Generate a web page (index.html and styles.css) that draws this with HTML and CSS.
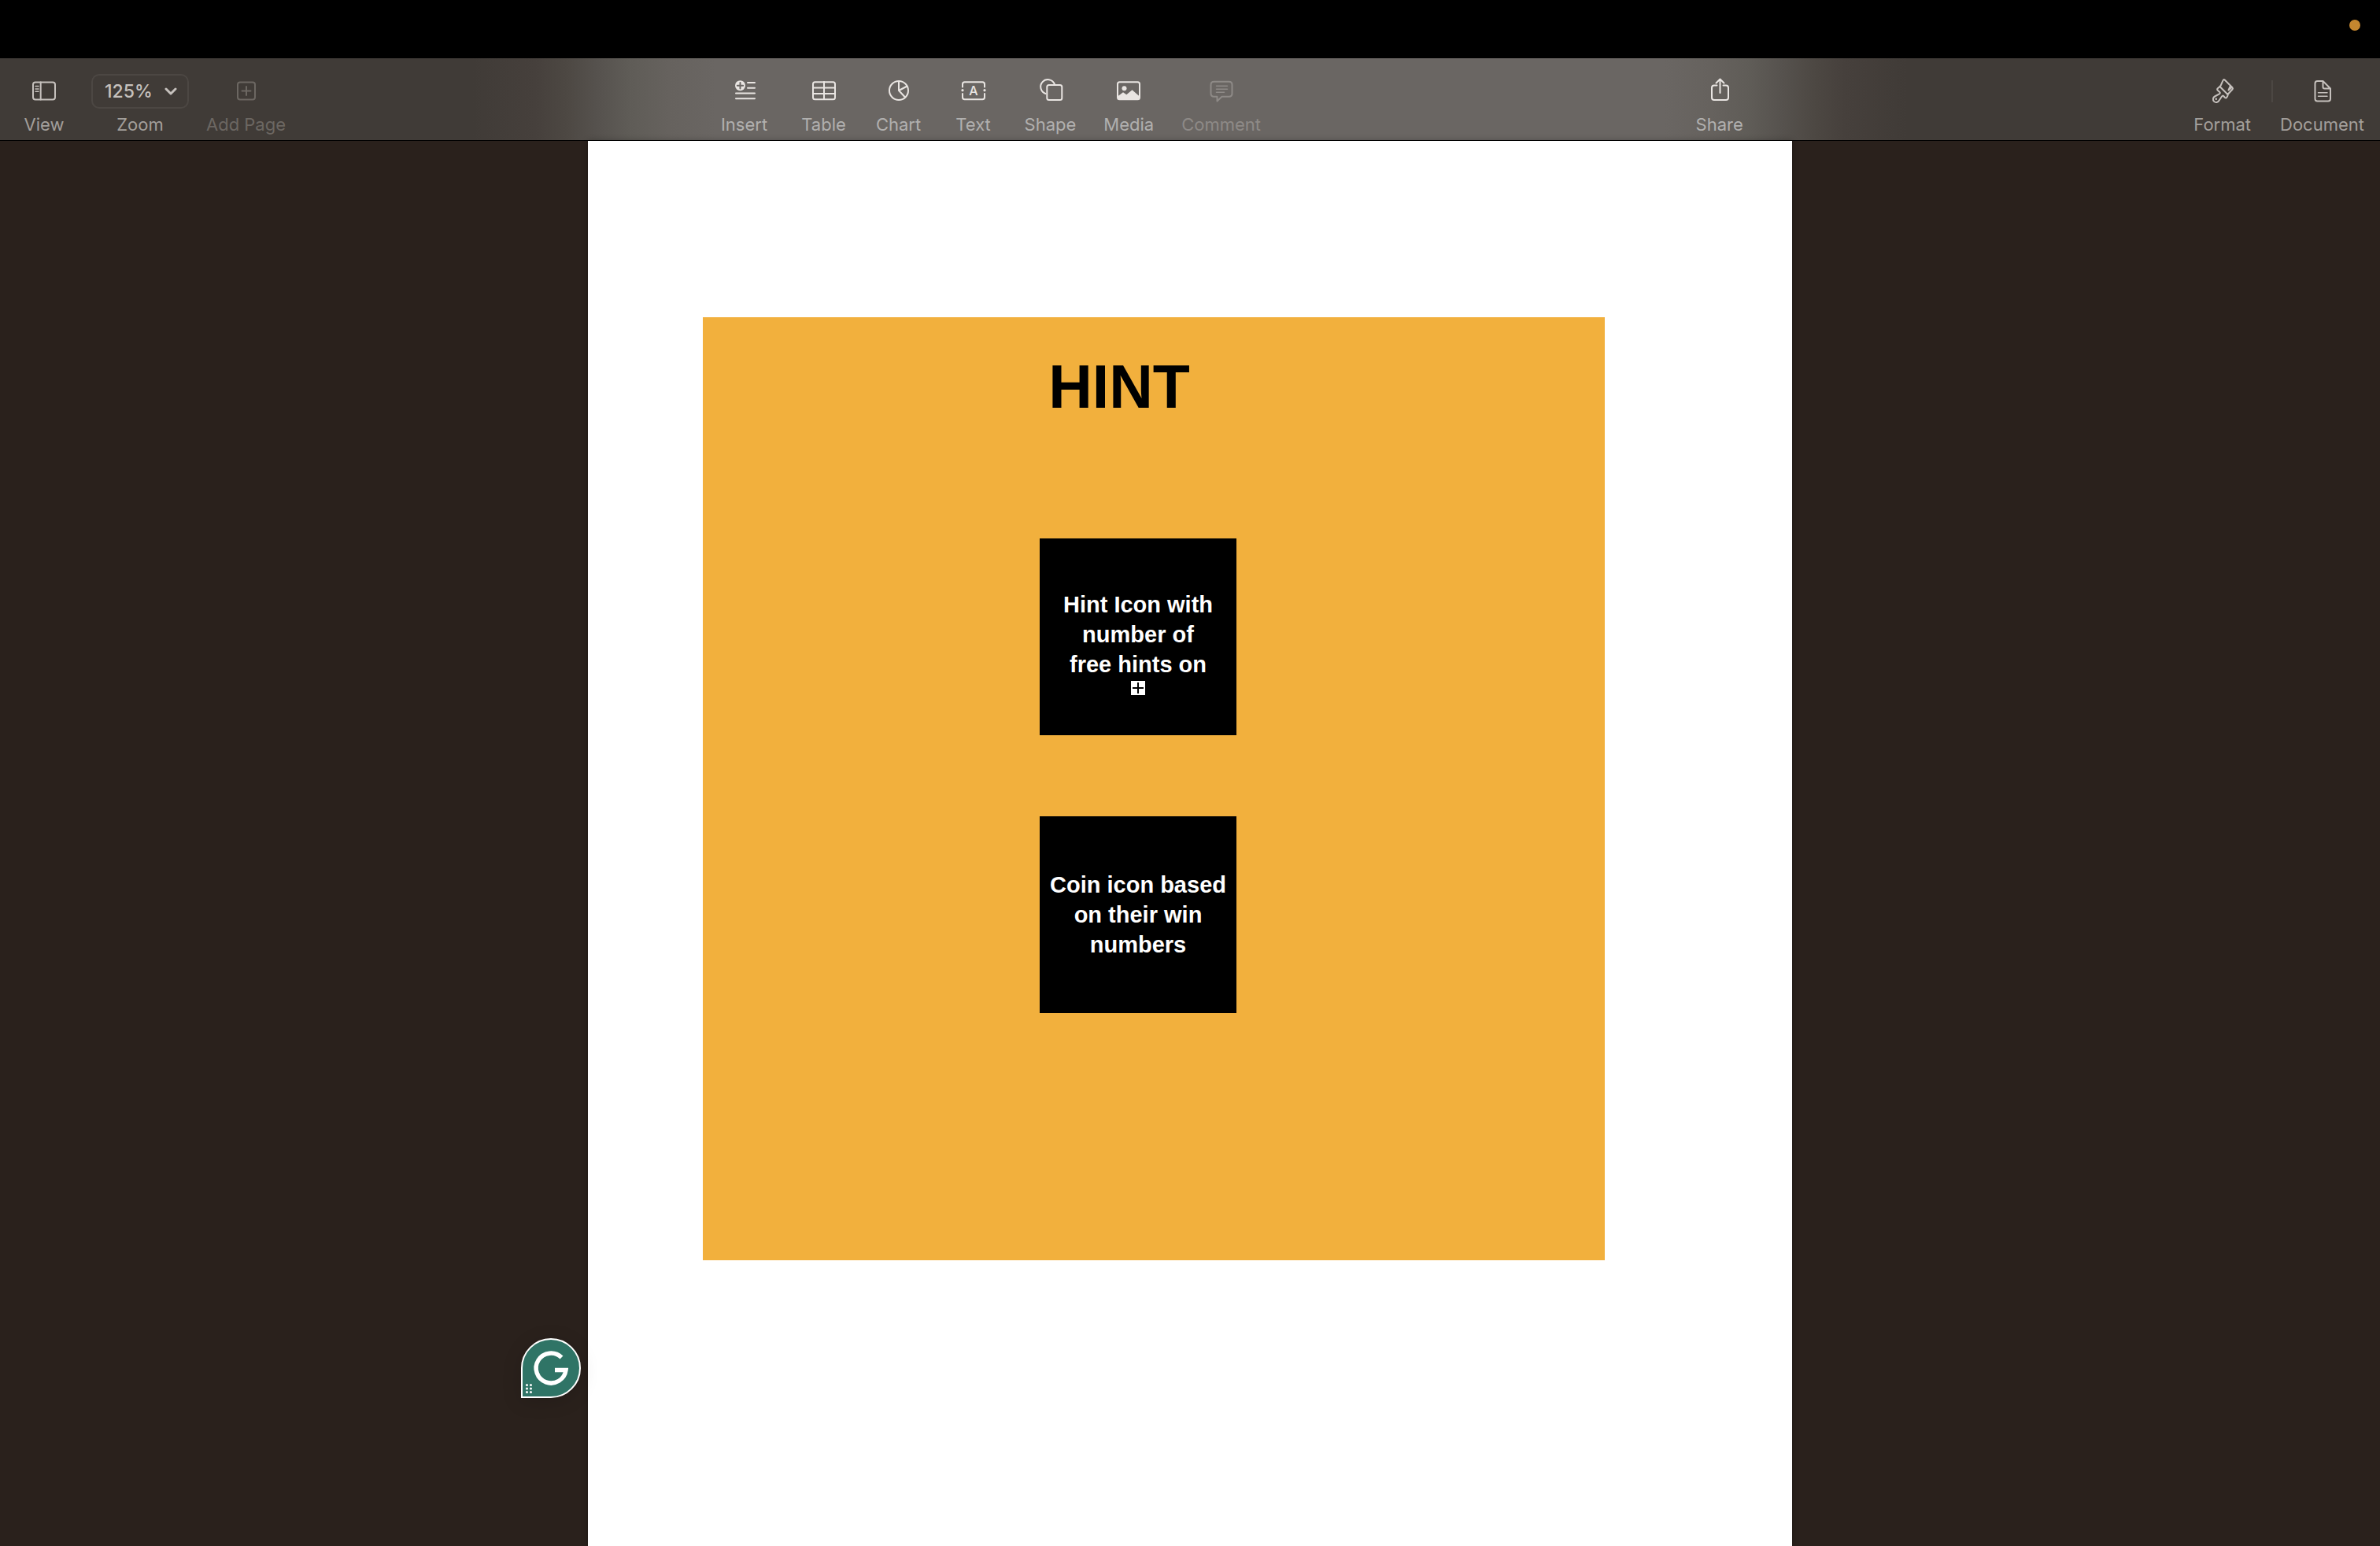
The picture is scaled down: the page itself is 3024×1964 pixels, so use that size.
FILE: index.html
```html
<!DOCTYPE html>
<html lang="en">
<head>
<meta charset="utf-8">
<title>Hint</title>
<link rel="stylesheet" href="styles.css">
</head>
<body>
<div class="menubar"><span class="recording-dot"></span></div>

<header class="toolbar">
  <div class="group group-view">
    <button class="tool" type="button">
      <svg class="icon" viewBox="0 0 44 44"><rect x="8" y="10.5" width="28" height="22" rx="3"/><path d="M17.7 10.5v22"/><path class="thin" d="M11 15.5h4M11 18.9h4M11 22.3h4"/></svg>
      <span class="label">View</span>
    </button>
    <div class="zoom">
      <div class="zoom-box">
        <select class="zoom-select" id="zoom"><option>125%</option></select>
        <svg class="chevron" viewBox="0 0 16 12"><path d="M2 3l6 6 6-6"/></svg>
      </div>
      <label class="label" for="zoom">Zoom</label>
    </div>
    <button class="tool tool-page" type="button" disabled>
      <svg class="icon" viewBox="0 0 44 44"><rect x="11" y="10.500" width="22" height="22" rx="3"/><path d="M22 16v11M16.500 21.500h11"/></svg>
      <span class="label">Add Page</span>
    </button>
  </div>

  <div class="group group-insert">
    <button class="tool tool-insert" type="button">
      <svg class="icon" viewBox="0 0 44 44"><circle class="solid" cx="16.500" cy="14.700" r="6.500"/><path class="cut" d="M16.500 11v7.400M12.800 14.700h7.400"/><path d="M26 11h9M26 17.800h9M11 24.500h24M11 31.200h24"/></svg>
      <span class="label">Insert</span>
    </button>
    <button class="tool" type="button">
      <svg class="icon" viewBox="0 0 44 44"><rect x="8" y="10.300" width="28" height="22" rx="2.500"/><path d="M22 10v22M8 17.600h28M8 25h28"/></svg>
      <span class="label">Table</span>
    </button>
    <button class="tool" type="button">
      <svg class="icon" viewBox="0 0 44 44"><circle cx="22" cy="21" r="12"/><path d="M22 9v12l10.500-5.500M22 21l8 8.500"/></svg>
      <span class="label">Chart</span>
    </button>
    <button class="tool" type="button">
      <svg class="icon" viewBox="0 0 44 44"><path d="M8 16.500V13q0-2.700 2.700-2.700h22.600Q36 10.300 36 13v3.500M8 25v4.500q0 2.800 2.700 2.800h22.600q2.700 0 2.700-2.800V25"/><circle class="solid" cx="8" cy="20.700" r="1.600"/><circle class="solid" cx="36" cy="20.700" r="1.600"/><text class="glyph" x="22" y="27">A</text></svg>
      <span class="label">Text</span>
    </button>
    <button class="tool" type="button">
      <svg class="icon" viewBox="0 0 44 44"><path d="M27.800 12.500A9.200 9.200 0 1 0 16.500 25"/><rect x="18.300" y="14" width="19" height="19" rx="2.500"/></svg>
      <span class="label">Shape</span>
    </button>
    <button class="tool" type="button">
      <svg class="icon" viewBox="0 0 44 44"><rect x="8" y="10.300" width="28" height="22" rx="2.500"/><circle class="solid" cx="16.500" cy="18.300" r="3"/><path class="solid" d="M8 28.500l7-5.200 4.300 3 7.200-6 9.500 8.200V32H8z"/></svg>
      <span class="label">Media</span>
    </button>
    <button class="tool" type="button" disabled>
      <svg class="icon" viewBox="0 0 44 44"><path d="M12.500 9.700h19q4 0 4 4v11q0 4-4 4h-9l-6 5.800v-5.800h-4q-4 0-4-4v-11q0-4 4-4z"/><path class="thin" d="M15.500 15.300h14M15.500 19.300h14M15.500 23.300h10"/></svg>
      <span class="label">Comment</span>
    </button>
  </div>

  <div class="group group-insert">
    <button class="tool" type="button">
      <svg class="icon" viewBox="0 0 44 44"><path d="M18.500 14.500H15q-3 0-3 3V30q0 3 3 3h15q3 0 3-3V17.500q0-3-3-3h-3.500M22.500 6.500V24M17.500 11.500l5-5 5 5"/></svg>
      <span class="label">Share</span>
    </button>
  </div>

  <div class="group group-panels">
    <button class="tool" type="button">
      <svg class="icon" viewBox="0 0 44 44"><path d="M18.500 16C21 13.500 21 10 23 7.500q.8-.7 1.700 0L34.500 17.300q1 1.200 0 2.200L28.500 26zM33 17.500l-3.500 3M32 15l-2.500 5.500"/><path d="M18.500 16l-2.700 2.300q-1.200 1.200 0 2.500l2.700 2.500q.8 1.200-.7 2l-5.800 3.200a4 4 0 1 0 5.500 5.300l3.500-5.300q1-1.500 2.200-.5l1.800 2q1.200 1 2.200-.2 1.800-1.800 1.300-3.800"/><circle class="solid" cx="13.800" cy="31.700" r="1.300"/></svg>
      <span class="label">Format</span>
    </button>
    <span class="divider"></span>
    <button class="tool" type="button">
      <svg class="icon" viewBox="0 0 44 44"><path d="M15.500 9h7L32 18.500V31.500q0 3-3 3H15.500q-3 0-3-3V12q0-3 3-3zM22.500 9v7.500q0 2 2 2H32"/><path class="thin" d="M16.500 23.700H28M16.500 28.300H28"/></svg>
      <span class="label">Document</span>
    </button>
  </div>
</header>

<main class="workspace">
  <article class="page">
    <section class="card">
      <h1 class="title">HINT</h1>
      <div class="tile tile-overflowing">
        <p class="tile-text">Hint Icon with<br>number of<br>free hints on</p>
        <svg class="overflow-mark" viewBox="0 0 18 18"><rect width="18" height="18" fill="#fff"/><path d="M9 2v14M2 9h14" stroke="#000" stroke-width="2"/></svg>
      </div>
      <div class="tile">
        <p class="tile-text">Coin icon based<br>on their win<br>numbers</p>
      </div>
    </section>
    <button class="assistant" type="button" aria-label="Writing assistant">
      <svg class="assistant-logo" viewBox="0 0 72 72"><path d="M49.500 22.500A19 19 0 1 0 55 38.500H41" fill="none" stroke="#fff" stroke-width="5.500"/><g fill="#fff"><circle cx="5.500" cy="57.500" r="1.500"/><circle cx="10.500" cy="57.500" r="1.500"/><circle cx="5.500" cy="62" r="1.500"/><circle cx="10.500" cy="62" r="1.500"/><circle cx="5.500" cy="66.500" r="1.500"/><circle cx="10.500" cy="66.500" r="1.500"/></g></svg>
    </button>
  </article>
</main>
</body>
</html>
```
FILE: styles.css
```css
* {
  box-sizing: border-box;
}

body {
  margin: 0;
  min-height: 100vh;
  display: flex;
  flex-direction: column;
  background: #2a211c;
  font-family: Inter, "Liberation Sans", sans-serif;
}

.menubar {
  height: 74px;
  padding: 25px 25px 0;
  display: flex;
  justify-content: flex-end;
  background: #000;
}

.recording-dot {
  width: 14px;
  height: 14px;
  border-radius: 50%;
  background: #c4862f;
}

.toolbar {
  position: relative;
  display: flex;
  justify-content: space-between;
  padding: 20px 20px 7px 26px;
  border-bottom: 1px solid #000;
  background: linear-gradient(90deg,
    #403b37 calc(50% - 912px),
    #46403c calc(50% - 832px),
    #4d4843 calc(50% - 792px),
    #56524e calc(50% - 752px),
    #5f5c57 calc(50% - 712px),
    #66625e calc(50% - 662px),
    #6a6663 calc(50% - 602px),
    #6a6663 calc(50% + 602px),
    #66625e calc(50% + 662px),
    #5f5c57 calc(50% + 712px),
    #56524e calc(50% + 752px),
    #4d4843 calc(50% + 792px),
    #46403c calc(50% + 832px),
    #403b37 calc(50% + 912px));
}

.group {
  display: flex;
  color: #c6c1bd;
}

.group-view {
  --label: #a39f9b;
  --disabled: #6c6762;
  gap: 30px;
}

.group-insert {
  --label: #b1b0af;
  --disabled: #8e8a87;
  gap: 35px;
  color: #e9e5e2;
}

.group-panels {
  --label: #a39f9b;
  --disabled: #6c6762;
  gap: 17px;
  padding-left: 20px;
}

.tool,
.zoom {
  display: flex;
  flex-direction: column;
  align-items: center;
  gap: 7px;
}

.tool {
  min-width: 60px;
  padding: 0;
  border: 0;
  background: none;
  color: inherit;
  font: inherit;
}

.tool:disabled {
  color: var(--disabled);
}

.tool:disabled .label {
  color: inherit;
}

.tool-page {
  margin-left: -8px;
}

.tool-insert {
  margin-right: 6px;
}

.label {
  font-size: 22px;
  line-height: 26px;
  color: var(--label);
}

.icon {
  width: 44px;
  height: 44px;
  fill: none;
  stroke: currentColor;
  stroke-width: 2;
  stroke-linecap: round;
  stroke-linejoin: round;
}

.thin {
  stroke-width: 1.5;
}

.solid {
  fill: currentColor;
  stroke: none;
}

.cut {
  stroke: #6a6663;
}

.glyph {
  fill: currentColor;
  stroke: none;
  font-size: 16px;
  font-weight: 500;
  text-anchor: middle;
}

.zoom-box {
  display: grid;
  align-items: center;
  width: 124px;
  height: 44px;
}

.zoom-select,
.chevron {
  grid-area: 1 / 1;
}

.zoom-select {
  width: 100%;
  height: 44px;
  padding: 0 0 0 15px;
  border: 2px solid #4c4743;
  border-radius: 10px;
  appearance: none;
  background: none;
  color: #c6c1bd;
  font: 500 23px Inter, "Liberation Sans", sans-serif;
}

.chevron {
  justify-self: end;
  width: 16px;
  height: 12px;
  margin-right: 15px;
  fill: none;
  stroke: #c6c1bd;
  stroke-width: 3;
  stroke-linecap: round;
  stroke-linejoin: round;
  pointer-events: none;
}

.divider {
  width: 2px;
  height: 28px;
  margin: 8px -8px 0 9px;
  background: #4c4743;
}

.workspace {
  flex: 1;
  display: flex;
  justify-content: center;
}

.page {
  position: relative;
  width: 1530px;
  padding: 224px 238px 224px 146px;
  background: #fff;
  box-shadow: 0 0 8px rgba(0, 0, 0, 0.3);
}

.card {
  display: flex;
  flex-direction: column;
  align-items: center;
  padding: 43px 40px 314px 0;
  background: #f2b03d;
}

.title {
  margin: 0 0 148px;
  padding-right: 48px;
  font: bold 77px/90px "Liberation Sans", sans-serif;
  color: #000;
}

.tile {
  width: 250px;
  height: 250px;
  display: flex;
  flex-direction: column;
  align-items: center;
  justify-content: center;
  gap: 2px;
  background: #000;
}

.tile + .tile {
  margin-top: 103px;
}

.tile-overflowing {
  justify-content: flex-start;
  padding-top: 65px;
}

.tile-text {
  margin: 0;
  font: bold 29px/38px "Liberation Sans", sans-serif;
  text-align: center;
  white-space: nowrap;
  color: #fff;
}

.overflow-mark {
  width: 18px;
  height: 18px;
}

/* Floats over the canvas beside the page. */
.assistant {
  position: absolute;
  left: -85px;
  top: 1521px;
  width: 76px;
  height: 76px;
  padding: 0;
  border: 2px solid #fff;
  border-radius: 50% 50% 50% 0;
  background: #2f7466;
  box-shadow: 0 4px 24px rgba(0, 0, 0, 0.15);
}

.assistant-logo {
  display: block;
  width: 72px;
  height: 72px;
}
```
